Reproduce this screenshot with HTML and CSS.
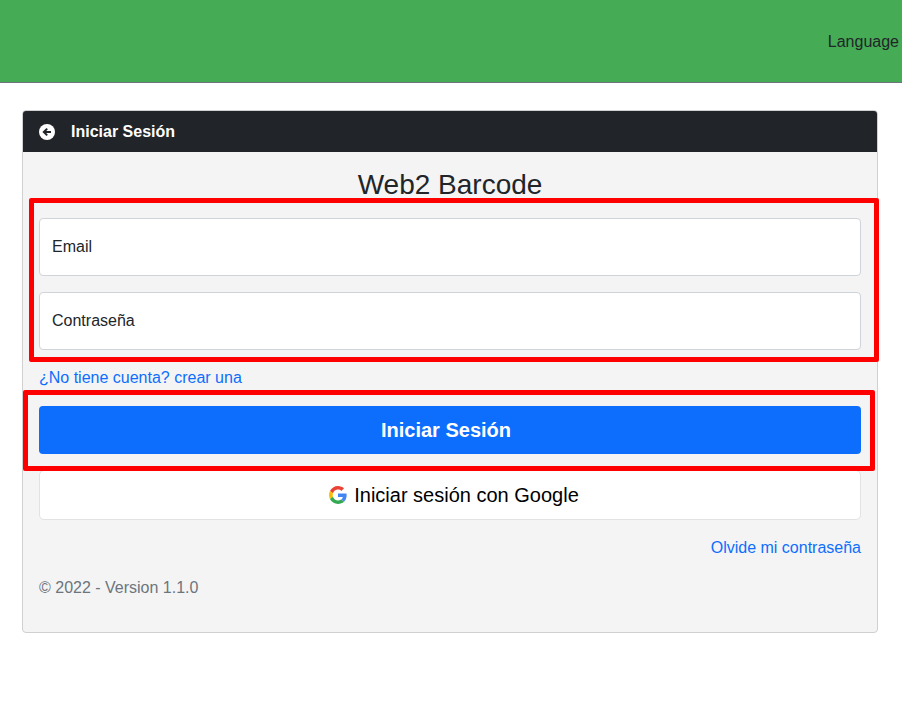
FILE: index.html
```html
<!DOCTYPE html>
<html lang="es">
<head>
<meta charset="utf-8">
<title>Web2 Barcode</title>
<link rel="stylesheet" href="styles.css">
</head>
<body>
<header class="topbar"><span class="lang">Language</span></header>
<main class="page">
  <section class="card">
    <div class="card-head">
      <svg class="back" viewBox="0 0 16 16" aria-hidden="true"><circle cx="8" cy="8" r="8" fill="#fff"/><path fill="none" stroke="#212529" stroke-width="2" d="M12 8H5.5M8.2 4.6 4.8 8l3.4 3.4"/></svg>
      <span class="head-title">Iniciar Sesión</span>
    </div>
    <div class="card-body">
      <h1 class="title">Web2 Barcode</h1>
      <div class="field">Email</div>
      <div class="field">Contraseña</div>
      <a class="signup" href="#">¿No tiene cuenta? crear una</a>
      <button class="btn-primary" type="button">Iniciar Sesión</button>
      <button class="btn-google" type="button">
        <svg class="g" viewBox="0 0 48 48" aria-hidden="true">
          <path fill="#EA4335" d="M24 9.5c3.54 0 6.71 1.22 9.21 3.6l6.85-6.85C35.9 2.38 30.47 0 24 0 14.62 0 6.51 5.38 2.56 13.22l7.98 6.19C12.43 13.72 17.74 9.5 24 9.5z"/>
          <path fill="#4285F4" d="M46.98 24.55c0-1.57-.15-3.09-.38-4.55H24v9.02h12.94c-.58 2.96-2.26 5.48-4.78 7.18l7.73 6c4.51-4.18 7.09-10.36 7.09-17.65z"/>
          <path fill="#FBBC05" d="M10.53 28.59c-.48-1.45-.76-2.99-.76-4.59s.27-3.14.76-4.59l-7.98-6.19C.92 16.46 0 20.12 0 24c0 3.88.92 7.54 2.56 10.78l7.97-6.19z"/>
          <path fill="#34A853" d="M24 48c6.48 0 11.93-2.13 15.89-5.81l-7.73-6c-2.15 1.45-4.92 2.3-8.16 2.3-6.26 0-11.57-4.22-13.47-9.91l-7.98 6.19C6.51 42.62 14.62 48 24 48z"/>
        </svg>
        <span>Iniciar sesión con Google</span>
      </button>
      <div class="forgot-row"><a class="forgot" href="#">Olvide mi contraseña</a></div>
      <p class="copy">© 2022 - Version 1.1.0</p>
    </div>
    <div class="mark mark-fields"></div>
    <div class="mark mark-button"></div>
  </section>
</main>
</body>
</html>
```
FILE: styles.css
```css
* { box-sizing: border-box; }
html, body { margin: 0; padding: 0; }
body {
  background: #fff;
  color: #212529;
  font-family: "Liberation Sans", Arial, sans-serif;
  font-size: 16px;
  line-height: 24px;
  height: 715px;
  overflow: hidden;
}
.topbar {
  height: 83px;
  background: #45ac55;
  border-bottom: 1px solid #6c757d;
  display: flex;
  justify-content: flex-end;
  align-items: center;
  padding: 2px 3px 0 0;
}
.lang { color: #212529; }
.page { padding: 27px 24px 0 22px; }
.card {
  position: relative;
  height: 523px;
  background: #f4f4f4;
  border: 1px solid #d0d0d0;
  border-radius: 4px;
}
.card-head {
  height: 41px;
  background: #212529;
  color: #fff;
  display: flex;
  align-items: center;
  padding-left: 16px;
  border-radius: 3px 3px 0 0;
  font-weight: 700;
}
.back { width: 16px; height: 16px; margin-right: 16px; }
.card-body { padding: 16px; display: flex; flex-direction: column; }
.title {
  margin: 0 0 16px;
  font-size: 28px;
  line-height: 34px;
  font-weight: 400;
  text-align: center;
}
.field {
  height: 58px;
  background: #fff;
  border: 1px solid #ced4da;
  border-radius: 4px;
  padding: 0 12px;
  display: flex;
  align-items: center;
  margin-bottom: 16px;
}
.signup, .forgot { color: #0d6efd; text-decoration: none; }
.signup { margin-bottom: 16px; align-self: flex-start; }
.btn-primary {
  height: 48px;
  background: #0d6efd;
  color: #fff;
  border: 0;
  border-radius: 4px;
  font: 700 20px/24px "Liberation Sans", Arial, sans-serif;
  margin-bottom: 16px;
  padding: 0;
  text-indent: -8px;
}
.btn-google {
  height: 50px;
  background: #fff;
  color: #000;
  border: 1px solid #e2e2e2;
  border-radius: 5px;
  font: 400 20px/24px "Liberation Sans", Arial, sans-serif;
  display: flex;
  align-items: center;
  justify-content: center;
  gap: 7px;
  margin-bottom: 16px;
  padding: 0 0 0 8px;
}
.g { width: 18px; height: 18px; }
.forgot-row { display: flex; justify-content: flex-end; margin-bottom: 16px; }
.copy { margin: 0; color: #6c757d; }
.mark { position: absolute; border: 5px solid #f00; border-radius: 2px; pointer-events: none; }
.mark-fields { left: 6px; top: 87px; width: 850px; height: 164px; }
.mark-button { left: 0; top: 279px; width: 852px; height: 81px; }
```
